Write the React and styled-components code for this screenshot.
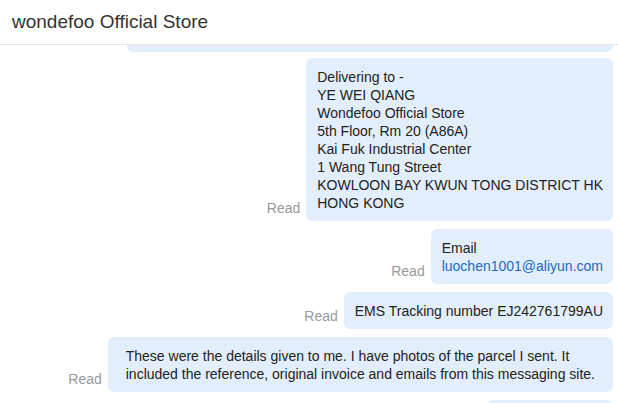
import React from "react";
import styled, { createGlobalStyle } from "styled-components";

const GlobalStyle = createGlobalStyle`
  html, body {
    margin: 0;
    padding: 0;
    background: #fff;
  }
  body {
    font-family: "Liberation Sans", Arial, sans-serif;
    overflow: hidden;
  }
`;

const messages = [
  {
    id: 1,
    lines: [
      "Delivering to -",
      "YE WEI QIANG",
      "Wondefoo Official Store",
      "5th Floor, Rm 20 (A86A)",
      "Kai Fuk Industrial Center",
      "1 Wang Tung Street",
      "KOWLOON BAY KWUN TONG DISTRICT HK",
      "HONG KONG",
    ],
  },
  { id: 2, lines: ["Email"], link: "luochen1001@aliyun.com" },
  { id: 3, lines: ["EMS Tracking number EJ242761799AU"] },
  {
    id: 4,
    wide: true,
    lines: [
      "These were the details given to me. I have photos of the parcel I sent. It",
      "included the reference, original invoice and emails from this messaging site.",
    ],
  },
];

const App = () => {
  return (
    <>
      <GlobalStyle />
      <Page>
        <Header>wondefoo Official Store</Header>
        <Thread>
          <Row>
            <Stub $top $width="486px" />
          </Row>
          {messages.map((m) => (
            <Row key={m.id}>
              <Read>Read</Read>
              <Bubble $wide={m.wide}>
                {m.lines.map((l, i) => (
                  <Line key={i}>{l}</Line>
                ))}
                {m.link && <Link href="#">{m.link}</Link>}
              </Bubble>
            </Row>
          ))}
          <Row>
            <Stub $width="126px" />
          </Row>
        </Thread>
      </Page>
    </>
  );
};

const Page = styled.div`
  width: 618px;
  height: 403px;
  overflow: hidden;
  display: flex;
  flex-direction: column;
`;

const Header = styled.div`
  height: 44px;
  flex-shrink: 0;
  display: flex;
  align-items: center;
  padding-left: 12px;
  font-size: 19px;
  color: #333;
  border-bottom: 1px solid #e6e6e6;
`;

const Thread = styled.div`
  flex: 1;
  overflow: hidden;
  display: flex;
  flex-direction: column;
  gap: 8px;
  padding-right: 5px;

  & > :nth-child(2) {
    margin-top: -2px;
  }
`;

const Row = styled.div`
  display: flex;
  justify-content: flex-end;
  align-items: flex-end;
  gap: 6px;
`;

const Read = styled.span`
  font-size: 14px;
  line-height: 18px;
  color: #999;
  padding-bottom: 4px;
`;

const Bubble = styled.div`
  background: #e2eefb;
  border-radius: 6px;
  padding: ${(p) => (p.$wide ? "10px 18px 9px 18px" : "10px 10px 9px 11px")};
  flex-shrink: 0;
  font-size: 14px;
  line-height: 18px;
  color: #222;
`;

const Stub = styled.div`
  background: #e2eefb;
  width: ${(p) => p.$width};
  height: ${(p) => (p.$top ? "7px" : "20px")};
  border-radius: ${(p) => (p.$top ? "0 0 6px 6px" : "6px 6px 0 0")};
  flex-shrink: 0;
`;

const Line = styled.div`
  white-space: nowrap;
`;

const Link = styled.a`
  display: block;
  color: #1a6bc4;
  text-decoration: none;
`;

export default App;
